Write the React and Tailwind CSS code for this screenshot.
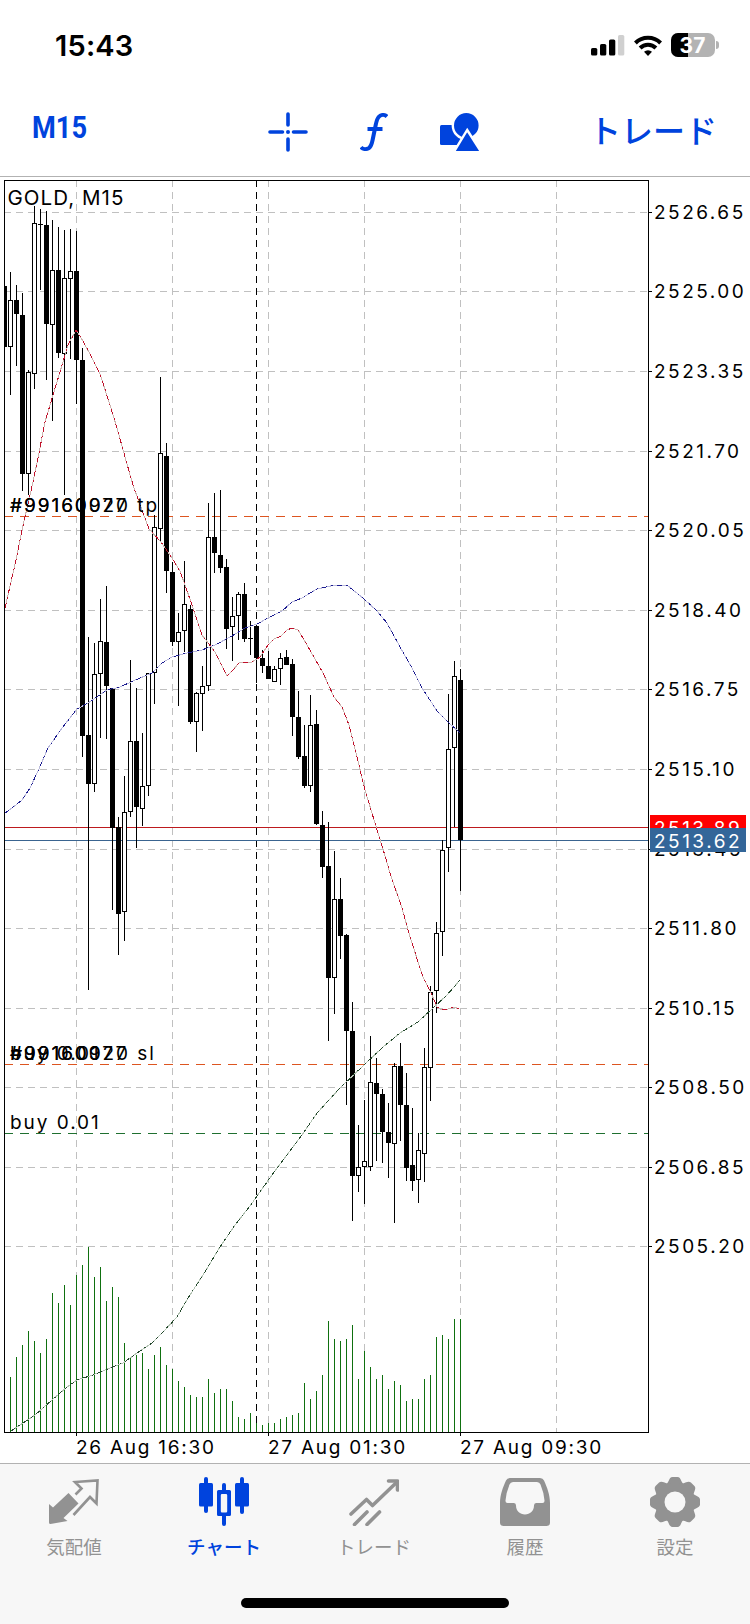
const UI_FONT = "Inter, 'Noto Sans CJK JP', sans-serif";

// [high, bodyTop, bodyBottom, low, filled], one candle every 6px from x = 4
const candles = [
  [286, 286, 347, 347, 1],
  [272, 300, 347, 395, 0],
  [285, 300, 314, 366, 1],
  [293, 315, 474, 491, 1],
  [370, 372, 474, 495, 0],
  [206, 223, 374, 389, 0],
  [209, 224, 225, 290, 1],
  [211, 225, 324, 380, 1],
  [220, 270, 325, 421, 0],
  [227, 270, 353, 358, 1],
  [230, 278, 354, 495, 0],
  [229, 271, 279, 359, 0],
  [231, 271, 360, 404, 1],
  [348, 360, 736, 757, 1],
  [637, 735, 784, 990, 1],
  [643, 674, 784, 792, 0],
  [599, 641, 674, 738, 0],
  [586, 642, 686, 739, 1],
  [688, 688, 828, 910, 1],
  [817, 827, 914, 955, 1],
  [776, 812, 912, 941, 0],
  [660, 741, 812, 817, 0],
  [688, 741, 807, 848, 1],
  [733, 786, 809, 826, 0],
  [673, 673, 786, 796, 0],
  [515, 527, 673, 704, 0],
  [377, 453, 529, 541, 0],
  [443, 456, 571, 593, 1],
  [562, 572, 642, 646, 1],
  [613, 632, 642, 706, 0],
  [561, 604, 631, 652, 0],
  [605, 609, 722, 724, 1],
  [692, 693, 722, 752, 0],
  [666, 686, 694, 731, 0],
  [503, 537, 686, 691, 0],
  [493, 537, 553, 573, 1],
  [490, 555, 568, 573, 1],
  [559, 567, 629, 649, 1],
  [597, 616, 627, 661, 0],
  [592, 594, 616, 640, 0],
  [583, 594, 639, 642, 1],
  [621, 638, 639, 655, 1],
  [626, 626, 658, 683, 1],
  [650, 658, 666, 673, 1],
  [651, 666, 679, 679, 1],
  [666, 669, 682, 682, 0],
  [653, 658, 669, 685, 0],
  [650, 657, 665, 665, 1],
  [659, 664, 717, 736, 1],
  [691, 717, 757, 759, 1],
  [725, 756, 786, 788, 1],
  [695, 725, 786, 792, 0],
  [710, 724, 824, 825, 1],
  [811, 825, 867, 878, 1],
  [822, 866, 978, 1041, 1],
  [851, 899, 978, 1014, 0],
  [878, 899, 936, 959, 1],
  [934, 935, 1031, 1105, 1],
  [1002, 1031, 1176, 1221, 1],
  [1125, 1167, 1176, 1192, 0],
  [1100, 1161, 1167, 1204, 0],
  [1036, 1082, 1167, 1171, 0],
  [1058, 1083, 1094, 1161, 1],
  [1089, 1094, 1132, 1163, 1],
  [1103, 1132, 1143, 1178, 1],
  [1063, 1066, 1144, 1223, 0],
  [1043, 1066, 1105, 1141, 1],
  [1073, 1105, 1168, 1181, 1],
  [1108, 1165, 1181, 1191, 1],
  [1133, 1150, 1180, 1203, 0],
  [1048, 1067, 1154, 1182, 0],
  [986, 992, 1068, 1101, 0],
  [922, 933, 991, 1013, 0],
  [840, 850, 932, 956, 0],
  [694, 749, 848, 872, 0],
  [661, 676, 748, 827, 0],
  [669, 680, 840, 891, 1],
];

// top of every volume bar, starting one slot to the right of the frame
const volumes = [
  1377, 1357, 1345, 1331, 1341, 1353, 1339, 1293, 1303, 1285, 1305, 1275, 1265,
  1247, 1277, 1267, 1301, 1287, 1297, 1343, 1357, 1355, 1353, 1369, 1355, 1347,
  1365, 1369, 1381, 1387, 1395, 1397, 1397, 1379, 1393, 1389, 1389, 1401, 1417,
  1419, 1413, 1423, 1425, 1423, 1423, 1419, 1417, 1415, 1413, 1383, 1399, 1391,
  1375, 1321, 1339, 1341, 1339, 1325, 1379, 1351, 1367, 1379, 1375, 1389, 1381,
  1385, 1401, 1399, 1399, 1379, 1375, 1337, 1335, 1339, 1319, 1319,
];

const averages = [
  {
    base: "#cdb5b0",
    dash: "#c0102a",
    points:
      "5,608 16,560 22,530 33,482 38,458 45,422 53,395 60,372 68,345 76,330 83,341 92,358 100,374 110,405 117,428 125,457 133,485 143,513 149,529 161,542 172,558 180,571 185,585 192,605 202,635 215,652 227,676 233,670 239,663 252,662 260,657 268,645 274,639 281,636 287,630 292,628 298,630 303,638 311,652 323,673 334,697 342,707 349,725 357,757 365,790 375,823 386,859 390,873 402,908 410,937 423,977 432,995 437,1007 442,1010 448,1009 454,1007 459,1009",
  },
  {
    base: "#b9b9dc",
    dash: "#1c1c90",
    points:
      "5,813 12,808 22,800 30,788 38,771 48,748 62,728 77,709 88,703 107,690 120,687 133,681 152,673 162,663 172,657 187,653 202,650 215,645 232,636 245,628 257,624 268,618 282,611 292,602 302,598 317,589 335,585 347,585 364,599 377,611 387,623 400,647 412,668 422,688 437,711 448,722 460,733",
  },
  {
    base: "#b4c4b4",
    dash: "#24492c",
    points:
      "11,1431 23,1423 35,1415 52,1400 67,1387 77,1380 93,1375 110,1368 123,1363 137,1353 152,1343 163,1332 177,1317 188,1298 203,1275 220,1247 235,1225 250,1206 257,1196 277,1168 302,1135 317,1113 340,1088 365,1064 383,1047 400,1033 418,1022 433,1008 447,995 460,980",
  },
];

const prices = [
  [212, "2526.65"],
  [291, "2525.00"],
  [371, "2523.35"],
  [451, "2521.70"],
  [530, "2520.05"],
  [610, "2518.40"],
  [689, "2516.75"],
  [769, "2515.10"],
  [849, "2513.45"],
  [928, "2511.80"],
  [1008, "2510.15"],
  [1087, "2508.50"],
  [1167, "2506.85"],
  [1246, "2505.20"],
];

const gridX = [76, 172, 268, 364, 460, 556];

const dates = [
  [76, "26 Aug 16:30"],
  [268, "27 Aug 01:30"],
  [460, "27 Aug 09:30"],
];

const levels = [
  [516, "#dd5520"],
  [1064, "#dd5520"],
  [1133, "#1f7030"],
];

const levelLabels = [
  [512, "#99160920 tp"],
  [512, "#99160077"],
  [1060, "#99160920 sl"],
  [1060, "#99160077"],
  [1060, "buy 0.01"],
  [1129, "buy 0.01"],
];

const Candle = ({ x, high, top, bottom, low, filled }) => {
  const height = bottom - top;
  return (
    <g>
      <rect x={x} y={high} width={1} height={low - high} />
      <rect x={x - 2} y={top} width={5} height={height} />
      {!filled && (
        <rect x={x - 1} y={top + 1} width={3} height={height - 2} fill="#fff" />
      )}
    </g>
  );
};

const Chart = () => (
  <svg
    viewBox="0 177 750 1286"
    className="block h-[1286px] w-[750px] shrink-0 bg-white"
    fontFamily={UI_FONT}
  >
    <defs>
      <clipPath id="plot">
        <rect x="5" y="181" width="643" height="1251" />
      </clipPath>
    </defs>

    <g shapeRendering="crispEdges" fill="none">
      <g stroke="#c0c0c0" strokeDasharray="7 5">
        {prices.map(([y]) => (
          <path key={y} d={`M4 ${y + 0.5}H648`} />
        ))}
        {gridX.map((x) => (
          <path key={x} d={`M${x + 0.5} 180V1432`} />
        ))}
      </g>
      <path d="M256.5 180V1432" stroke="#000" strokeDasharray="7 5" />
      <path d="M4 827.5H648" stroke="#bd1a1e" />
      <path d="M4 840.5H648" stroke="#3a6490" />
      {levels.map(([y, color]) => (
        <path key={y} d={`M4 ${y + 0.5}H648`} stroke={color} strokeDasharray="9 7" />
      ))}
    </g>

    <g clipPath="url(#plot)">
      <g fill="#0f700f" shapeRendering="crispEdges">
        {volumes.map((y, i) => (
          <rect key={i} x={10 + i * 6} y={y} width={1} height={1432 - y} />
        ))}
      </g>
      <g fill="#000" shapeRendering="crispEdges">
        {candles.map(([high, top, bottom, low, filled], i) => (
          <Candle
            key={i}
            x={4 + i * 6}
            high={high}
            top={top}
            bottom={bottom}
            low={low}
            filled={filled}
          />
        ))}
      </g>
      {averages.map((line) => (
        <g key={line.dash} fill="none" shapeRendering="crispEdges">
          <polyline points={line.points} stroke={line.base} />
          <polyline points={line.points} stroke={line.dash} strokeDasharray="5 4 2 4" />
        </g>
      ))}
    </g>

    {/* Frame and axis ticks */}
    <g stroke="#000" fill="none" shapeRendering="crispEdges">
      <rect x="4.5" y="180.5" width="644" height="1252" />
      {prices.map(([y]) => (
        <path key={y} d={`M649 ${y + 0.5}h3`} />
      ))}
      {dates.map(([x]) => (
        <path key={x} d={`M${x + 0.5} 1433v3`} />
      ))}
    </g>

    <text x="7.5" y="204.5" fontSize="20.5" letterSpacing="1.05">
      GOLD, M15
    </text>

    <g fontSize="19" letterSpacing="1.95">
      {levelLabels.map(([y, text]) => (
        <text key={`${y}-${text}`} x="10" y={y}>
          {text}
        </text>
      ))}
    </g>

    <g fontSize="19" letterSpacing="1.75">
      {dates.map(([x, text]) => (
        <text key={x} x={x} y="1454">
          {text}
        </text>
      ))}
    </g>

    <g fontSize="19" letterSpacing="2.5">
      {prices.map(([y, text]) => (
        <text key={y} x="654" y={y + 7}>
          {text}
        </text>
      ))}
      <rect x="650" y="815" width="96" height="24" fill="#ff0000" />
      <text x="654" y="835" fill="#fff">
        2513.89
      </text>
      <rect x="650" y="828" width="96" height="24" fill="#336699" />
      <text x="654" y="848" fill="#fff">
        2513.62
      </text>
    </g>
  </svg>
);

const StatusBar = () => (
  <div className="flex h-[90px] shrink-0 items-center justify-between pr-[31px] pl-[55px]">
    <span className="text-[29px] leading-none font-semibold tracking-[0.2px] text-black">
      15:43
    </span>
    <div className="flex items-center">
      <svg viewBox="0 0 34 22" className="h-[22px] w-[34px]">
        <rect x="0" y="14" width="6.3" height="7.5" rx="1.6" />
        <rect x="9" y="10" width="6.3" height="11.5" rx="1.6" />
        <rect x="18" y="5.5" width="6.3" height="16" rx="1.6" />
        <rect x="27" y="1" width="6.3" height="20.5" rx="1.6" fill="#d0d0d0" />
      </svg>
      <svg viewBox="0 0 28 21" className="ml-[9px] h-[21px] w-[28px]">
        <g fill="none" stroke="#000" strokeWidth="4">
          <path d="M1.4 8a18 18 0 0 1 25.2 0" />
          <path d="M6.1 13a11.3 11.3 0 0 1 15.8 0" />
        </g>
        <path d="M14 21l-4-4.2a5.8 5.8 0 0 1 8 0z" />
      </svg>
      <div className="relative ml-[9px] flex h-[24px] w-[44px] items-center justify-center overflow-hidden rounded-[7px] bg-[#b3b3b3]">
        <div className="absolute inset-y-0 left-0 w-[17px] bg-black" />
        <span className="relative text-[21px] leading-none font-bold text-white">
          37
        </span>
      </div>
      <div className="ml-[1.5px] h-[8px] w-[3px] rounded-r-full bg-[#b3b3b3]" />
    </div>
  </div>
);

const Toolbar = () => (
  <div className="flex h-[86px] shrink-0 items-start text-[#0043dd]">
    <div className="w-[268px] pt-[21px] pl-[32px]">
      <span
        className="inline-block origin-left scale-x-[0.85] text-[32px] leading-none font-bold"
        style={{ fontFamily: "Roboto, sans-serif" }}
      >
        M15
      </span>
    </div>
    <svg viewBox="0 0 40 40" className="mt-[22px] h-[40px] w-[40px]">
      <g stroke="currentColor" strokeWidth="3.6" strokeLinecap="round">
        <path d="M20 2v11M20 27v11M2 20h12.5M25.5 20H38" />
      </g>
      <circle cx="20" cy="20" r="2" fill="currentColor" />
    </svg>
    <svg viewBox="0 0 28 38" className="mt-[23px] ml-[52px] h-[38px] w-[28px]">
      <g fill="none" stroke="currentColor" strokeWidth="4">
        <path d="M27 3.6C25 1.6 21.5 1.200 19 3.600 17 5.500 16.400 8.500 15.700 12L12.600 27C11.800 31 10.700 34 8.600 35.200 6 36.600 2.600 36.200 1 34.200" />
        <path d="M7.500 16h15" />
      </g>
    </svg>
    <svg viewBox="0 0 40 38" className="mt-[23px] ml-[52px] h-[38px] w-[40px]">
      <rect x="0" y="12" width="21" height="20" rx="1.5" fill="currentColor" />
      <circle cx="26.3" cy="12.4" r="13.5" fill="currentColor" stroke="#fff" strokeWidth="2.4" />
      <path
        d="M27.2 17L41.5 39.5H13.5z"
        fill="currentColor"
        stroke="#fff"
        strokeWidth="2.4"
      />
    </svg>
    <span className="mt-[26px] ml-[109px] text-[32px] leading-none font-medium whitespace-nowrap">
      トレード
    </span>
  </div>
);

const QuotesIcon = () => (
  <svg viewBox="0 0 50 46" className="h-[46px] w-[50px]">
    <path
      d="M0 25l4 3.5L19.5 14 29.5 24.5 14.5 39l4 3L1.5 45A1.5 1.5 0 0 1 0 43.5z"
      fill="currentColor"
    />
    <path
      d="M26.5 15.5L32.5 9.5 26 3 48.5 1.5 47.5 24.5 41 18 24.5 36"
      fill="none"
      stroke="currentColor"
      strokeWidth="2.6"
    />
  </svg>
);

const ChartIcon = () => (
  <svg viewBox="0 0 50 50" className="h-[50px] w-[50px]" fill="currentColor">
    <rect x="0" y="6" width="14" height="23.5" rx="1.5" />
    <rect x="5" y="0" width="4" height="36" rx="2" />
    <rect x="36" y="6" width="14" height="23.5" rx="1.5" />
    <rect x="41" y="0" width="4" height="37" rx="2" />
    <path
      fillRule="evenodd"
      d="M19.5 13h11a1.5 1.5 0 0 1 1.5 1.5v23a1.5 1.5 0 0 1-1.5 1.5h-11a1.5 1.5 0 0 1-1.5-1.5v-23a1.5 1.5 0 0 1 1.5-1.5zM23 17a1.2 1.2 0 0 0-1.2 1.2v16A1.2 1.2 0 0 0 23 35.4h4a1.2 1.2 0 0 0 1.2-1.2v-16A1.2 1.2 0 0 0 27 17z"
    />
    <path d="M23 14V8a2 2 0 0 1 4 0v6zM23 38v9a2 2 0 0 0 4 0v-9z" />
  </svg>
);

const TradeIcon = () => (
  <svg
    viewBox="0 0 50 47"
    className="h-[47px] w-[50px]"
    fill="none"
    stroke="currentColor"
    strokeWidth="3.6"
    strokeLinecap="round"
    strokeLinejoin="round"
  >
    <path d="M2 35L17.5 20.5 23.5 26.5 48 3" />
    <path d="M39.5 2H48.5V11" />
    <path d="M5.5 45.5L18 33M18 45.5L30.5 33" />
  </svg>
);

const HistoryIcon = () => (
  <svg viewBox="0 0 50 48" className="h-[48px] w-[50px]">
    <path
      fill="currentColor"
      fillRule="evenodd"
      d="M10 0H40Q43 0 44 2.5C47 9 50 17 50 25V44.5Q50 48 46.5 48H3.5Q0 48 0 44.5V25C0 17 3 9 6 2.5Q7 0 10 0zM13 4Q10.5 4 9.5 6.5 6 15 5.5 22.5 5.3 25 7.5 25H14Q16 25 16 27.5C16 33 20 36.5 25 36.5S34 33 34 27.5Q34 25 36 25H42.5Q44.7 25 44.5 22.5 44 15 40.5 6.5 39.5 4 37 4z"
    />
  </svg>
);

const SettingsIcon = () => (
  <svg viewBox="-25 -25 50 50" className="h-[50px] w-[50px]">
    <g fill="currentColor">
      {[0, 45, 90, 135].map((deg) => (
        <path
          key={deg}
          transform={`rotate(${deg})`}
          d="M-10 -17C-6 -18 -6.5 -25 -2.5 -25H2.5C6.5 -25 6 -18 10 -17V17C6 18 6.5 25 2.5 25H-2.5C-6.5 25 -6 18 -10 17z"
        />
      ))}
    </g>
    <circle r="10.5" fill="#f7f7f7" />
  </svg>
);

const tabs = [
  { label: "気配値", Icon: QuotesIcon, inset: "pr-[2px]" },
  { label: "チャート", Icon: ChartIcon, inset: "pr-[2px]", active: true },
  { label: "トレード", Icon: TradeIcon, inset: "pr-[2px]" },
  { label: "履歴", Icon: HistoryIcon, inset: "pr-0" },
  { label: "設定", Icon: SettingsIcon, inset: "pr-0" },
];

const TabBar = () => (
  <div className="flex h-[161px] shrink-0 flex-col border-t border-[#b2b2b2] bg-[#f7f7f7]">
    <div className="grid grid-cols-5">
      {tabs.map(({ label, Icon, inset, active }) => (
        <div
          key={label}
          className={`flex flex-col items-center ${inset} ${
            active ? "font-medium text-[#0043dd]" : "font-normal text-[#929292]"
          }`}
        >
          <div className="mt-[12px] flex h-[52px] items-center">
            <Icon />
          </div>
          <span className="mt-[9px] text-[18.5px] leading-[20px] whitespace-nowrap">
            {label}
          </span>
        </div>
      ))}
    </div>
    <div className="mt-[41px] h-[10px] w-[268px] self-center rounded-full bg-black" />
  </div>
);

export default function App() {
  return (
    <div
      className="flex h-[1624px] w-[750px] flex-col overflow-hidden bg-white text-black"
      style={{ fontFamily: UI_FONT }}
    >
      <StatusBar />
      <Toolbar />
      <div className="h-px shrink-0 bg-[#b2b2b2]" />
      <Chart />
      <TabBar />
    </div>
  );
}
